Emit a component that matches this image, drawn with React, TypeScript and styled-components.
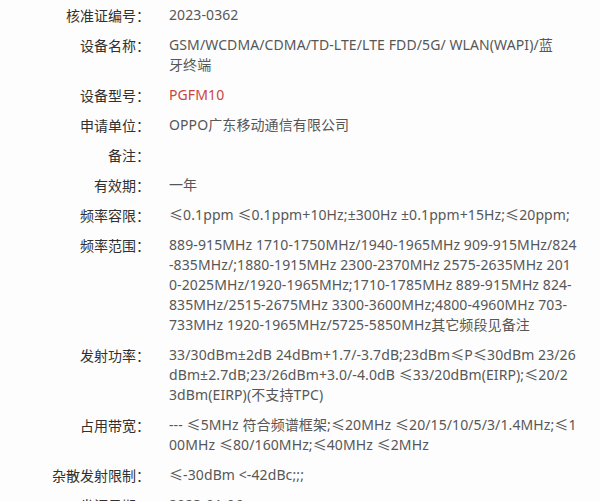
import styled, {createGlobalStyle} from "styled-components";

const GlobalStyle = createGlobalStyle`
	html, body {
		margin: 0;
		padding: 0;
		background: #fdfdfd;
	}
	body {
		font-family: "Noto Sans", "Noto Sans CJK SC", sans-serif;
	}
`;

const Page = styled.div`
	height: 501px;
	overflow: hidden;
	padding-top: 5px;
	box-sizing: border-box;
`;

const Table = styled.div`
	display: grid;
	grid-template-columns: 150px 1fr;
	column-gap: 19px;
	row-gap: 10px;
`;

const Label = styled.div`
	text-align: right;
	font-family: "Noto Sans CJK SC", sans-serif;
	font-size: 14px;
	line-height: 20px;
	font-weight: 400;
	color: #303030;
	white-space: nowrap;
`;

const Value = styled.div<{ $accent?: boolean }>`
	font-size: 14px;
	line-height: 20px;
	letter-spacing: 0.1px;
	color: ${(p) => (p.$accent ? "#c9463d" : "#575757")};
	min-height: 20px;
`;

const Line = styled.div`
	white-space: nowrap;
`;

const rows: { label: string; lines: string[]; accent?: boolean }[] = [
	{label: "核准证编号：", lines: ["2023-0362"]},
	{label: "设备名称：", lines: ["GSM/WCDMA/CDMA/TD-LTE/LTE FDD/5G/ WLAN(WAPI)/蓝", "牙终端"]},
	{label: "设备型号：", lines: ["PGFM10"], accent: true},
	{label: "申请单位：", lines: ["OPPO广东移动通信有限公司"]},
	{label: "备注：", lines: []},
	{label: "有效期：", lines: ["一年"]},
	{label: "频率容限：", lines: ["≤0.1ppm ≤0.1ppm+10Hz;±300Hz ±0.1ppm+15Hz;≤20ppm;"]},
	{
		label: "频率范围：",
		lines: [
			"889-915MHz 1710-1750MHz/1940-1965MHz 909-915MHz/824",
			"-835MHz/;1880-1915MHz 2300-2370MHz 2575-2635MHz 201",
			"0-2025MHz/1920-1965MHz;1710-1785MHz 889-915MHz 824-",
			"835MHz/2515-2675MHz 3300-3600MHz;4800-4960MHz 703-",
			"733MHz 1920-1965MHz/5725-5850MHz其它频段见备注",
		],
	},
	{
		label: "发射功率：",
		lines: [
			"33/30dBm±2dB 24dBm+1.7/-3.7dB;23dBm≤P≤30dBm 23/26",
			"dBm±2.7dB;23/26dBm+3.0/-4.0dB ≤33/20dBm(EIRP);≤20/2",
			"3dBm(EIRP)(不支持TPC)",
		],
	},
	{
		label: "占用带宽：",
		lines: [
			"--- ≤5MHz 符合频谱框架;≤20MHz ≤20/15/10/5/3/1.4MHz;≤1",
			"00MHz ≤80/160MHz;≤40MHz ≤2MHz",
		],
	},
	{label: "杂散发射限制：", lines: ["≤-30dBm <-42dBc;;;"]},
	{label: "发证日期：", lines: ["2023-01-06"]},
];

export default function App() {
	return <>
		<GlobalStyle/>
		<Page>
			<Table>
				{rows.map((row) => [
					<Label key={row.label + "l"}>{row.label}</Label>,
					<Value key={row.label + "v"} $accent={row.accent}>
						{row.lines.map((line, i) => <Line key={i}>{line}</Line>)}
					</Value>,
				])}
			</Table>
		</Page>
	</>;
}
